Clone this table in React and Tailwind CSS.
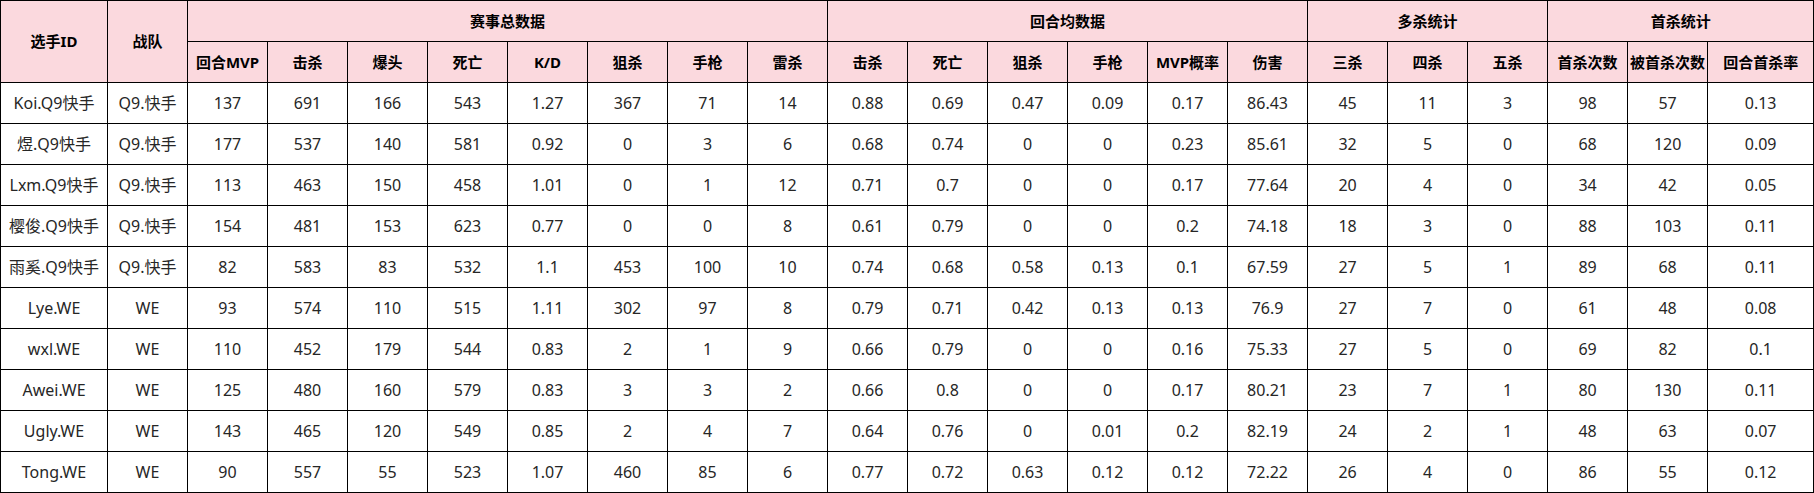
const groups = [
  { title: "赛事总数据", cols: ["回合MVP", "击杀", "爆头", "死亡", "K/D", "狙杀", "手枪", "雷杀"] },
  { title: "回合均数据", cols: ["击杀", "死亡", "狙杀", "手枪", "MVP概率", "伤害"] },
  { title: "多杀统计", cols: ["三杀", "四杀", "五杀"] },
  { title: "首杀统计", cols: ["首杀次数", "被首杀次数", "回合首杀率"] },
];

const rows = [
  ["Koi.Q9快手", "Q9.快手", 137, 691, 166, 543, 1.27, 367, 71, 14, 0.88, 0.69, 0.47, 0.09, 0.17, 86.43, 45, 11, 3, 98, 57, 0.13],
  ["煜.Q9快手", "Q9.快手", 177, 537, 140, 581, 0.92, 0, 3, 6, 0.68, 0.74, 0, 0, 0.23, 85.61, 32, 5, 0, 68, 120, 0.09],
  ["Lxm.Q9快手", "Q9.快手", 113, 463, 150, 458, 1.01, 0, 1, 12, 0.71, 0.7, 0, 0, 0.17, 77.64, 20, 4, 0, 34, 42, 0.05],
  ["樱俊.Q9快手", "Q9.快手", 154, 481, 153, 623, 0.77, 0, 0, 8, 0.61, 0.79, 0, 0, 0.2, 74.18, 18, 3, 0, 88, 103, 0.11],
  ["雨奚.Q9快手", "Q9.快手", 82, 583, 83, 532, 1.1, 453, 100, 10, 0.74, 0.68, 0.58, 0.13, 0.1, 67.59, 27, 5, 1, 89, 68, 0.11],
  ["Lye.WE", "WE", 93, 574, 110, 515, 1.11, 302, 97, 8, 0.79, 0.71, 0.42, 0.13, 0.13, 76.9, 27, 7, 0, 61, 48, 0.08],
  ["wxl.WE", "WE", 110, 452, 179, 544, 0.83, 2, 1, 9, 0.66, 0.79, 0, 0, 0.16, 75.33, 27, 5, 0, 69, 82, 0.1],
  ["Awei.WE", "WE", 125, 480, 160, 579, 0.83, 3, 3, 2, 0.66, 0.8, 0, 0, 0.17, 80.21, 23, 7, 1, 80, 130, 0.11],
  ["Ugly.WE", "WE", 143, 465, 120, 549, 0.85, 2, 4, 7, 0.64, 0.76, 0, 0.01, 0.2, 82.19, 24, 2, 1, 48, 63, 0.07],
  ["Tong.WE", "WE", 90, 557, 55, 523, 1.07, 460, 85, 6, 0.77, 0.72, 0.63, 0.12, 0.12, 72.22, 26, 4, 0, 86, 55, 0.12],
];

const th = "border border-black bg-[#fbd9de] text-center font-bold text-[15px] text-black";
const td = "border border-black text-center text-[16px] text-[#262626]";

export default function App() {
  return (
    <div className="bg-white" style={{ fontFamily: '"Noto Sans", "Noto Sans CJK SC", sans-serif' }}>
      <table className="border-collapse table-fixed w-[1814px]">
        <colgroup>
          <col className="w-[107px]" />
          <col className="w-[80px]" />
          {Array.from({ length: 19 }).map((_, i) => (
            <col key={i} className="w-[80px]" />
          ))}
          <col className="w-[106px]" />
        </colgroup>
        <thead>
          <tr className="h-[41px]">
            <th rowSpan={2} className={th}>选手ID</th>
            <th rowSpan={2} className={th}>战队</th>
            {groups.map(g => (
              <th key={g.title} colSpan={g.cols.length} className={th}>{g.title}</th>
            ))}
          </tr>
          <tr className="h-[41px]">
            {groups.flatMap(g => g.cols.map(c => (
              <th key={g.title + c} className={th + " px-0 whitespace-nowrap"}>{c}</th>
            )))}
          </tr>
        </thead>
        <tbody>
          {rows.map(r => (
            <tr key={r[0]} className="h-[41px]">
              {r.map((v, i) => (
                <td key={i} className={td + " whitespace-nowrap"}>{v}</td>
              ))}
            </tr>
          ))}
        </tbody>
      </table>
    </div>
  );
}
